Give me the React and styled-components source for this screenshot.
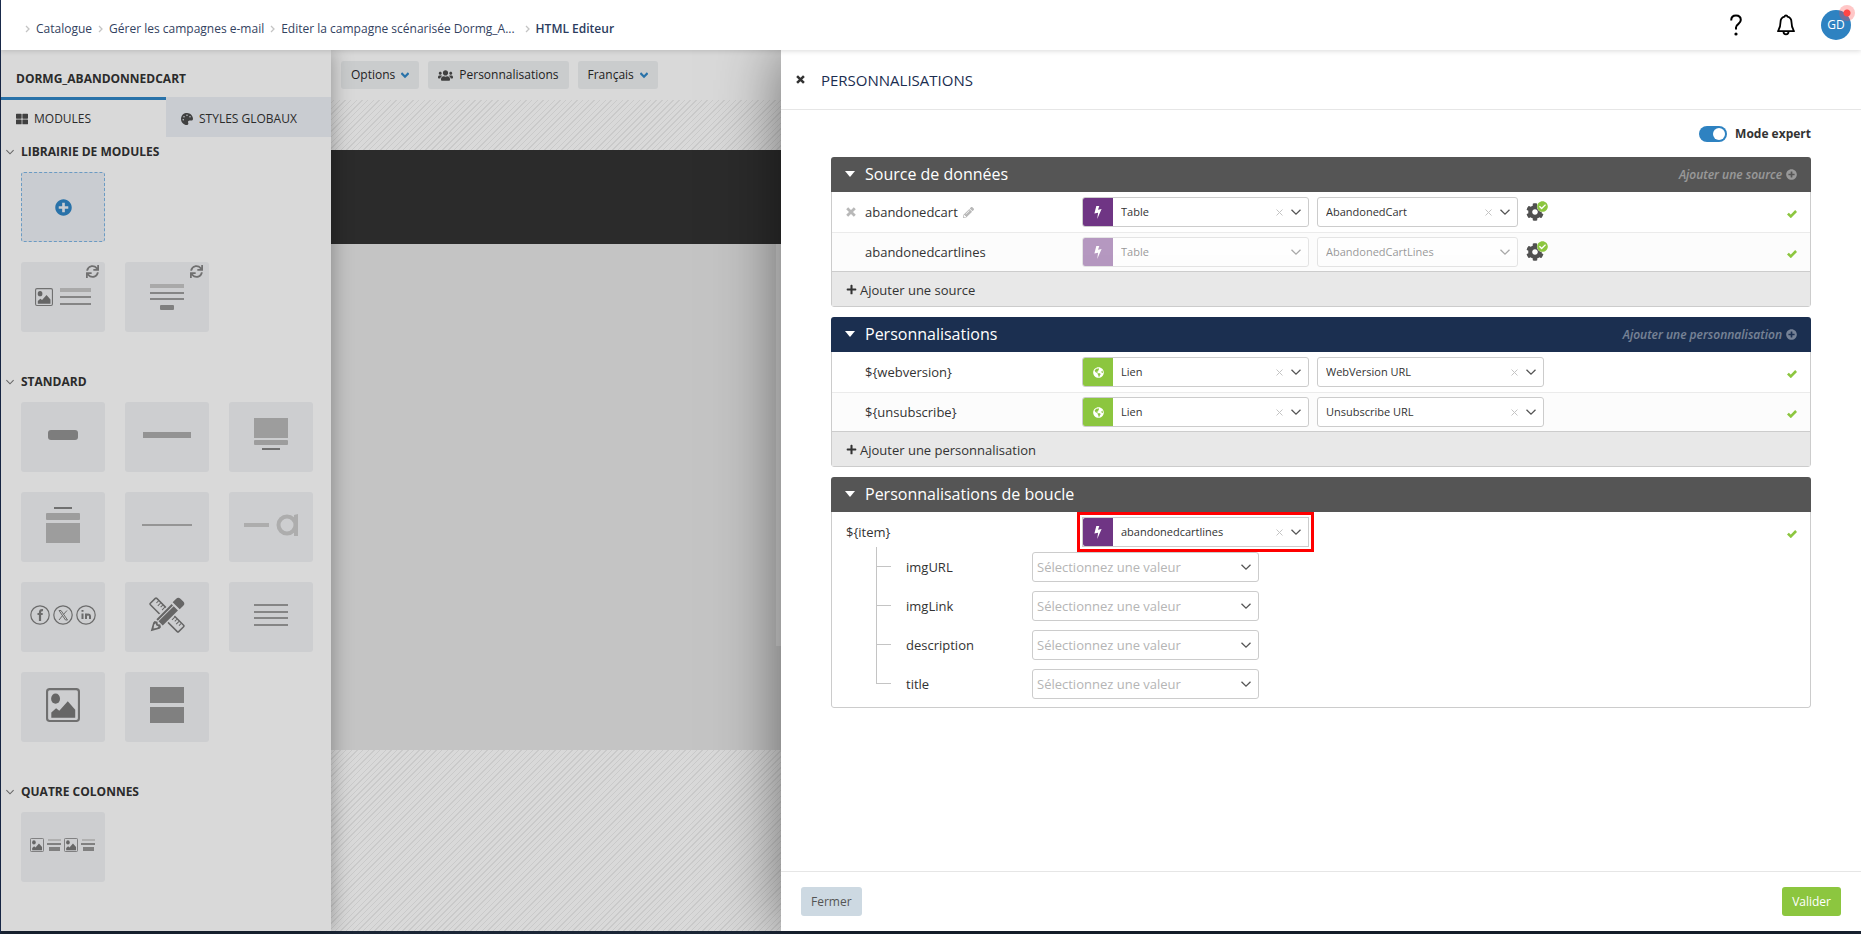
import React from "react";
import styled, { createGlobalStyle } from "styled-components";
import {
  FaThLarge,
  FaPalette,
  FaUsers,
  FaSync,
  FaPlusCircle,
  FaPlus,
  FaPencilAlt,
  FaGlobeAmericas,
  FaCog,
  FaCheckCircle
} from "react-icons/fa";

const GlobalStyle = createGlobalStyle`
  * {
    box-sizing: border-box;
  }
  body {
    margin: 0;
    font-family: "Open Sans", "Noto Sans", sans-serif;
    font-size: 13px;
    line-height: 18px;
    color: #333;
    background: #fff;
  }
  button, select {
    font: inherit;
    color: inherit;
    border: 0;
    padding: 0;
    background: none;
    cursor: pointer;
  }
  h1, h2, p {
    margin: 0;
    font-size: inherit;
    font-weight: inherit;
  }
  svg {
    display: block;
    flex: none;
  }
`;

const Page = styled.div`
  min-height: 100vh;
  display: flex;
  flex-direction: column;
  border-left: 1px solid #1b2d50;
  border-bottom: 3px solid #1b2636;
`;

/* header */

const Header = styled.header`
  position: relative;
  z-index: 3;
  height: 50px;
  padding: 0 10px 0 24px;
  display: flex;
  align-items: center;
  justify-content: space-between;
  background: #fff;
  box-shadow: 0 1px 5px rgba(0, 0, 0, 0.15);
`;

const Breadcrumb = styled.nav`
  display: flex;
  align-items: center;
  gap: 6px;
  margin-top: 8px;
  svg {
    color: #c4c4c4;
  }
`;

const Crumb = styled.a`
  font-size: 12px;
  font-weight: ${props => (props.$current ? 600 : 400)};
  color: ${props => (props.$current ? "#2b3c5e" : "#33425f")};
  text-decoration: none;
  margin-right: ${props => (props.$wide ? "4px" : "0")};
`;

const HeaderActions = styled.div`
  display: flex;
  align-items: center;
`;

const HeaderButton = styled.button`
  width: 50px;
  height: 30px;
  display: flex;
  align-items: center;
  justify-content: center;
  color: #000;
`;

const Avatar = styled.button`
  position: relative;
  width: 30px;
  height: 30px;
  margin-left: 10px;
  border-radius: 50%;
  background: #2e82c1;
  color: #fff;
  font-size: 12px;
  &::after {
    content: "";
    position: absolute;
    top: -5px;
    right: -4px;
    width: 16px;
    height: 16px;
    border-radius: 50%;
    background: radial-gradient(
      circle,
      #ff4545 0 3px,
      rgba(255, 69, 69, 0.3) 4px
    );
  }
`;

const Main = styled.div`
  flex: 1;
  display: flex;
`;

/* sidebar */

const Sidebar = styled.aside`
  position: relative;
  z-index: 1;
  flex: 0 0 330px;
  background: #d9d9d9;
  color: #2b2b2b;
  font-size: 12px;
  box-shadow: 0 0 20px rgba(0, 0, 0, 0.35);
`;

const SidebarTitle = styled.h1`
  height: 47px;
  padding: 20px 15px 0;
  font-weight: 700;
`;

const Tabs = styled.div`
  display: flex;
`;

const Tab = styled.button`
  flex: 1;
  height: 40px;
  padding: 0 15px;
  display: flex;
  align-items: center;
  gap: 6px;
  border-top: 3px solid ${props => (props.$active ? "#2972a9" : "#c9ccd1")};
  background: ${props => (props.$active ? "#d9d9d9" : "#c9ccd1")};
  svg {
    color: #404040;
  }
`;

const Section = styled.section`
  padding-bottom: 35px;
`;

const SectionTitle = styled.button`
  height: 30px;
  margin-bottom: 5px;
  padding: 0 5px;
  display: flex;
  align-items: center;
  gap: 7px;
  font-weight: 700;
  svg {
    color: #666;
  }
`;

const Tiles = styled.div`
  display: grid;
  grid-template-columns: repeat(3, 84px);
  gap: 20px;
  padding-left: 20px;
`;

const AddRow = styled.div`
  padding-bottom: 20px;
`;

const Tile = styled.button`
  position: relative;
  height: 70px;
  padding-bottom: ${props => (props.$standard ? "4px" : "0")};
  display: flex;
  align-items: center;
  justify-content: center;
  border-radius: 3px;
  border: ${props => (props.$add ? "1px dashed #6b9bc3" : "0")};
  background: ${props => (props.$add ? "#c9ccd1" : "#cdced0")};
  color: ${props => (props.$add ? "#2972a9" : "#707070")};
`;

const TileBadge = styled.span`
  position: absolute;
  top: 3px;
  right: 6px;
`;

/* editor canvas */

const Editor = styled.main`
  flex: 5 1 0;
  min-width: 0;
  display: flex;
  flex-direction: column;
  background-color: #d9d9d9;
`;

const Toolbar = styled.div`
  height: 50px;
  padding: 0 10px;
  display: flex;
  align-items: center;
  gap: 9px;
  white-space: nowrap;
`;

const ToolButton = styled.button`
  height: 28px;
  padding: 0 10px;
  display: flex;
  align-items: center;
  gap: 6px;
  border-radius: 3px;
  background: #cacccd;
  color: #222;
  font-size: 12px;
  svg {
    color: ${props => (props.$people ? "#404040" : "#2972a9")};
  }
`;

const Canvas = styled.div`
  flex: 1;
  padding-top: 50px;
  background-image: repeating-linear-gradient(
    -45deg,
    #d9d9d9 0 3px,
    #cacaca 3px 4px
  );
`;

const MailHeader = styled.div`
  height: 94px;
  background: #2b2b2b;
`;

const MailBody = styled.div`
  height: 506px;
  display: flex;
  justify-content: flex-end;
  background: #c4c4c4;
`;

const MailContent = styled.div`
  width: 5px;
  height: 402px;
  background: #d4d4d4;
`;

/* drawer */

const Drawer = styled.section`
  position: relative;
  z-index: 2;
  flex: 12 1 0;
  min-width: 0;
  display: flex;
  flex-direction: column;
  background: #fff;
  box-shadow: 0 0 60px rgba(0, 0, 0, 0.5);
`;

const DrawerHeader = styled.div`
  height: 60px;
  padding: 0 15px;
  display: flex;
  align-items: center;
  gap: 16px;
  border-bottom: 1px solid #e6e6e6;
`;

const DrawerTitle = styled.h2`
  font-size: 15px;
  line-height: 22px;
  color: #1b2d50;
`;

const DrawerBody = styled.div`
  flex: 1;
  padding: 14px 50px;
`;

const DrawerFooter = styled.div`
  height: 60px;
  padding: 0 20px;
  display: flex;
  align-items: center;
  justify-content: space-between;
  border-top: 1px solid #e6e6e6;
`;

const FooterButton = styled.button`
  height: 29px;
  padding: 0 10px;
  border-radius: 3px;
  font-size: 12px;
  background: ${props => (props.$primary ? "#8cc63f" : "#cdd9e2")};
  color: ${props => (props.$primary ? "#fff" : "#555")};
  font-weight: ${props => (props.$primary ? 500 : 400)};
`;

const Expert = styled.label`
  display: flex;
  align-items: center;
  justify-content: flex-end;
  gap: 8px;
  height: 20px;
  margin-bottom: 13px;
  font-size: 12px;
  font-weight: 700;
`;

const Switch = styled.input`
  appearance: none;
  width: 28px;
  height: 16px;
  margin: 0;
  padding: 2px;
  display: flex;
  justify-content: flex-end;
  border-radius: 8px;
  background: #2e82c1;
  &::before {
    content: "";
    width: 12px;
    height: 12px;
    border-radius: 50%;
    background: #fff;
  }
`;

const Panel = styled.section`
  margin-bottom: 10px;
  border-radius: 3px;
  overflow: hidden;
`;

const PanelHeader = styled.div`
  height: 35px;
  padding: 0 14px;
  display: flex;
  align-items: center;
  justify-content: space-between;
  background: ${props => (props.$blue ? "#1b2f50" : "#555")};
  color: #fff;
`;

const PanelToggle = styled.button`
  display: flex;
  align-items: center;
  gap: 10px;
  padding-bottom: 1px;
  font-size: 16px;
`;

const PanelAdd = styled.button`
  display: flex;
  align-items: center;
  gap: 4px;
  font-size: 12px;
  font-style: italic;
  font-weight: 600;
  opacity: 0.4;
`;

const PanelBody = styled.div`
  border: 1px solid #ccc;
  border-top: 0;
  border-radius: 0 0 3px 3px;
  padding-bottom: ${props => (props.$loop ? "8px" : "0")};
`;

const Row = styled.div`
  height: 40px;
  padding: 0 13px 0 14px;
  display: flex;
  align-items: center;
  gap: 8px;
  background: ${props => (props.$alt ? "#fcfcfc" : "#fff")};
  box-shadow: ${props => (props.$alt ? "inset 0 1px #ebebeb" : "none")};
`;

const RowName = styled.div`
  flex: 0 0 228px;
  display: flex;
  align-items: center;
  gap: 5px;
  padding-left: ${props => (props.$indent ? "19px" : "0")};
  svg {
    color: #b8b8b8;
  }
`;

const RemoveButton = styled.button`
  width: 14px;
`;

const RowCheck = styled.span`
  margin: 4px 0 0 auto;
  color: #8cc63f;
`;

const PanelFooter = styled.button`
  width: 100%;
  height: 35px;
  margin-top: -1px;
  padding: 1px 14px 0;
  display: flex;
  align-items: center;
  gap: 3px;
  border-top: 1px solid #ccc;
  background: #e8e8e8;
`;

const Field = styled.div`
  width: ${props => (props.$short ? "201px" : "227px")};
  height: 30px;
  display: flex;
  border: 1px solid #ccc;
  border-radius: ${props => (props.$marked ? "0" : "3px")};
  background: #fff;
  opacity: ${props => (props.$disabled ? 0.5 : 1)};
  outline: ${props => (props.$marked ? "3px solid #f00" : "none")};
  outline-offset: 2px;
`;

const FieldIcon = styled.span`
  width: 30px;
  display: flex;
  align-items: center;
  justify-content: center;
  border-radius: 2px 0 0 2px;
  color: #fff;
  background: ${props => (props.$green ? "#8cc63f" : "#6f3584")};
`;

const FieldBox = styled.div`
  flex: 1;
  display: grid;
  align-items: center;
`;

const FieldSelect = styled.select`
  grid-area: 1 / 1;
  appearance: none;
  width: 100%;
  height: 28px;
  padding: 0 44px 0 ${props => (props.$empty ? "4px" : "8px")};
  font-size: ${props => (props.$empty ? "13px" : "11px")};
  color: ${props => (props.$empty ? "#b5b5b5" : "#333")};
  opacity: 1;
`;

const FieldEnd = styled.div`
  grid-area: 1 / 1;
  justify-self: end;
  display: flex;
  align-items: center;
  gap: 8px;
  padding-right: 7px;
  color: #555;
  pointer-events: none;
  button {
    color: #c4c4c4;
    pointer-events: auto;
  }
`;

const GearButton = styled.button`
  position: relative;
  color: #505050;
`;

const GearBadge = styled.span`
  position: absolute;
  top: -2px;
  left: 11px;
  color: #8cc63f;
  background: #fff;
  border-radius: 50%;
`;

const Tree = styled.div`
  margin-left: 44px;
  display: flex;
  flex-direction: column;
  gap: 9px;
`;

const TreeRow = styled.div`
  height: 30px;
  display: flex;
  align-items: center;
`;

const Branch = styled.span`
  align-self: flex-end;
  flex: 0 0 15px;
  height: ${props => (props.$first ? "20px" : "39px")};
  margin-bottom: 15px;
  border-left: 1px solid #c4c4c4;
  border-bottom: 1px solid #c4c4c4;
`;

const TreeLabel = styled.label`
  flex: 0 0 141px;
  padding-left: 15px;
`;

/* drawings */

const Chevron = ({ size = 10, weight = 1.3 }) => (
  <svg width={size} height={size} viewBox="0 0 10 10" fill="none" stroke="currentColor" strokeWidth={weight}>
    <path d="M.5 2.700 5 7.200l4.500-4.500" />
  </svg>
);

const CrumbArrow = () => (
  <svg width="5" height="8" viewBox="0 0 5 8" fill="none" stroke="currentColor" strokeWidth="1.3">
    <path d="M1 1l3 3-3 3" />
  </svg>
);

const Caret = () => (
  <svg width="10" height="6" viewBox="0 0 10 6" fill="currentColor">
    <path d="M0 0h10L5 6z" />
  </svg>
);

const Cross = ({ size = 10 }) => (
  <svg width={size} height={size} viewBox="0 0 10 10" stroke="currentColor" strokeWidth="2.800">
    <path d="M1.200 1.200l7.600 7.600M8.800 1.200l-7.600 7.600" />
  </svg>
);

const Clear = () => (
  <svg width="7" height="7" viewBox="0 0 7 7" stroke="currentColor">
    <path d="M.5.5l6 6M6.5.5l-6 6" />
  </svg>
);

const Tick = () => (
  <svg width="10" height="8" viewBox="0 0 10 8" fill="none" stroke="currentColor" strokeWidth="2.600">
    <path d="M.9 3.600l2.900 2.800L9.100 1" />
  </svg>
);

const Bolt = () => (
  <svg width="8" height="13" viewBox="0 0 8 13" fill="currentColor">
    <path d="M2.3 0h3L4 3.7 7.6 3 3.2 13l.9-6.2L.4 7.6z" />
  </svg>
);

const HelpIcon = () => (
  <svg width="12" height="22" viewBox="0 0 12 22" fill="none" stroke="#000" strokeWidth="2">
    <path d="M1.2 6.5C1.2 3.3 3 1.6 6 1.6s4.800 1.700 4.800 4.500c0 4-4.800 4-4.800 7.400v2" />
    <circle cx="6" cy="20" r="1.600" fill="#000" stroke="none" />
  </svg>
);

const BellIcon = () => (
  <svg width="18" height="22" viewBox="0 0 18 22" fill="none" stroke="#000" strokeWidth="1.800" strokeLinejoin="round">
    <path d="M7.700 2.600a1.300 1.300 0 0 1 2.600 0c2.700.6 4.200 2.800 4.200 5.700 0 4.600 1 6 2.500 8.900H1c1.500-2.900 2.500-4.300 2.500-8.900 0-2.900 1.500-5.100 4.200-5.700z" />
    <path d="M6.500 17.500c0 1.900 1 2.900 2.500 2.900s2.500-1 2.500-2.900" />
  </svg>
);

const Picture = ({ x = 0, y = 0, size = 32 }) => (
  <svg x={x} y={y} width={size} height={size} viewBox="0 0 32 32">
    <rect x="1" y="1" width="30" height="30" rx="2.500" fill="none" stroke="#707070" strokeWidth="2" />
    <ellipse cx="9" cy="10" rx="4.200" ry="4.800" fill="#666" />
    <path d="M5 28v-5l4.500-4 3 2.500 8-9 7 8v7.500z" fill="#666" />
  </svg>
);

const drawings = {
  add: <FaPlusCircle size={17} />,
  pictureText: (
    <svg width="56" height="20">
      <Picture x={0} y={1} size={18} />
      <path fill="#a9a9a9" d="M25 1h31v4H25z" />
      <path fill="#858585" d="M25 9h31v2H25zM25 16h31v2H25z" />
    </svg>
  ),
  textButton: (
    <svg width="34" height="28">
      <path fill="#a9a9a9" d="M0 1h34v4H0z" />
      <path fill="#858585" d="M0 9h34v2H0zM0 15h34v2H0z" />
      <rect x="10" y="22" width="14" height="5" rx="1" fill="#808080" />
    </svg>
  ),
  button: (
    <svg width="30" height="10">
      <rect width="30" height="10" rx="3" fill="#7d7d7d" />
    </svg>
  ),
  band: (
    <svg width="48" height="6">
      <path fill="#939393" d="M0 0h48v6H0z" />
    </svg>
  ),
  articleDown: (
    <svg width="34" height="34">
      <path fill="#9d9d9d" d="M0 0h34v20H0z" />
      <rect y="22" width="34" height="5" rx="1" fill="#9d9d9d" />
      <rect x="8" y="30" width="18" height="2" fill="#707070" />
    </svg>
  ),
  articleUp: (
    <svg width="34" height="36">
      <rect x="8" y="0" width="18" height="2" fill="#707070" />
      <rect y="6" width="34" height="7" rx="1" fill="#9d9d9d" />
      <path fill="#9d9d9d" d="M0 16h34v20H0z" />
    </svg>
  ),
  line: (
    <svg width="50" height="2">
      <path fill="#959595" d="M0 0h50v2H0z" />
    </svg>
  ),
  spacer: (
    <svg width="54" height="24" fill="none" stroke="#adadad">
      <path strokeWidth="4" d="M0 12h25" />
      <circle cx="43" cy="12" r="8.500" strokeWidth="4" />
      <path fill="#adadad" stroke="none" d="M50 2l4-1v22h-4z" />
    </svg>
  ),
  social: (
    <svg width="66" height="20" fill="none" stroke="#6b6b6b" strokeWidth="1.200">
      <circle cx="10" cy="10" r="9.200" />
      <circle cx="33" cy="10" r="9.200" />
      <circle cx="56" cy="10" r="9.200" />
      <path strokeWidth="2.200" d="M13 5.200c-2.500-.3-3 .6-3 2.500V16M7.500 9h5.200" />
      <path strokeWidth="1" d="M29 5.500h2l6.500 9.500h-2zM37 5.500l-3.600 4M32.200 11 29 15" />
      <path strokeWidth="2" d="M52.500 8.500V14M52.500 5v1.800M56 14V8.500M56 11c0-1.800 4-2.300 4 .2V14" />
    </svg>
  ),
  tools: (
    <svg width="36" height="36" viewBox="0 0 36 36">
      <g transform="rotate(45 18 18)" fill="none" stroke="#666">
        <rect x="-2" y="13.500" width="40" height="9" rx="1" strokeWidth="1.500" />
        <path d="M2 14v3M5 14v4M8 14v3M11 14v4M25 14v4M28 14v3M31 14v4M34 14v3" />
      </g>
      <g transform="rotate(-45 18 18)">
        <path fill="#cdced0" d="M-5 17l7-5h34l4 2v8l-4 2H2z" />
        <path fill="#666" d="M-5 18l8-4.500h2l1.500 2.500-1.500 2 1.500 2-1.500 2.500H3zM7.500 13.500H29v2H7.500zM7.500 16.500H29v6H7.500zM31 13h5q3 0 3 3v4q0 3-3 3h-5z" />
        <path fill="#cdced0" d="M-1 18l3-2.200h2l-1 2.200 1 2.200H2z" />
      </g>
    </svg>
  ),
  text: (
    <svg width="34" height="24">
      <path fill="#858585" d="M0 1h34v2H0zM0 8h34v2H0zM0 14h34v2H0zM0 21h34v2H0z" />
    </svg>
  ),
  picture: <Picture size={34} />,
  blocks: (
    <svg width="34" height="36">
      <path fill="#808080" d="M0 0h34v16H0zM0 20h34v16H0z" />
    </svg>
  ),
  columns: (
    <svg width="66" height="14">
      <Picture x={0} y={0} size={14} />
      <Picture x={34} y={0} size={14} />
      <path fill="#b0b0b0" d="M18 1h13v2H18zM52 1h13v2H52z" />
      <path fill="#808080" d="M17 5h14v2H17zM19 9h11v4H19zM51 5h14v2H51zM53 9h11v4H53z" />
    </svg>
  )
};

const standard = [
  ["Bouton", "button"],
  ["Bandeau", "band"],
  ["Article", "articleDown"],
  ["Article avec titre", "articleUp"],
  ["Ligne", "line"],
  ["Préheader", "spacer"],
  ["Réseaux sociaux", "social"],
  ["Libre", "tools"],
  ["Texte", "text"],
  ["Image", "picture"],
  ["Blocs", "blocks"]
];

const Heading = ({ children }) => (
  <h2>
    <SectionTitle>
      <Chevron size={8} />
      {children}
    </SectionTitle>
  </h2>
);

const Select = ({ icon, value, label, id, clear, ...rest }) => (
  <Field {...rest}>
    {icon && (
      <FieldIcon $green={icon === "globe"}>
        {icon === "globe" ? <FaGlobeAmericas size={11} /> : <Bolt />}
      </FieldIcon>
    )}
    <FieldBox>
      <FieldSelect id={id} aria-label={label} disabled={rest.$disabled} $empty={rest.$empty}>
        <option>{value}</option>
      </FieldSelect>
      <FieldEnd>
        {clear && (
          <button aria-label="Effacer">
            <Clear />
          </button>
        )}
        <Chevron />
      </FieldEnd>
    </FieldBox>
  </Field>
);

const PanelTop = ({ title, add, blue }) => (
  <PanelHeader $blue={blue}>
    <h2>
      <PanelToggle>
        <Caret />
        {title}
      </PanelToggle>
    </h2>
    {add && (
      <PanelAdd>
        {add}
        <FaPlusCircle size={11} />
      </PanelAdd>
    )}
  </PanelHeader>
);

const Gear = () => (
  <GearButton aria-label="Paramètres">
    <FaCog size={18} />
    <GearBadge>
      <FaCheckCircle size={11} />
    </GearBadge>
  </GearButton>
);

const Valid = () => (
  <RowCheck>
    <Tick />
  </RowCheck>
);

export default function App() {
  return (
    <Page>
      <GlobalStyle />
      <Header>
        <Breadcrumb>
          <CrumbArrow />
          <Crumb href="#catalogue">Catalogue</Crumb>
          <CrumbArrow />
          <Crumb href="#campagnes">Gérer les campagnes e-mail</Crumb>
          <CrumbArrow />
          <Crumb href="#campagne" $wide>Editer la campagne scénarisée Dormg_A...</Crumb>
          <CrumbArrow />
          <Crumb href="#editeur" $current>HTML Editeur</Crumb>
        </Breadcrumb>
        <HeaderActions>
          <HeaderButton aria-label="Aide">
            <HelpIcon />
          </HeaderButton>
          <HeaderButton aria-label="Notifications">
            <BellIcon />
          </HeaderButton>
          <Avatar>GD</Avatar>
        </HeaderActions>
      </Header>
      <Main>
        <Sidebar>
          <SidebarTitle>DORMG_ABANDONNEDCART</SidebarTitle>
          <Tabs>
            <Tab $active>
              <FaThLarge size={12} />
              MODULES
            </Tab>
            <Tab>
              <FaPalette size={12} />
              STYLES GLOBAUX
            </Tab>
          </Tabs>
          <Section>
            <Heading>LIBRAIRIE DE MODULES</Heading>
            <AddRow>
              <Tiles>
                <Tile $add aria-label="Ajouter un module">{drawings.add}</Tile>
              </Tiles>
            </AddRow>
            <Tiles>
              {["pictureText", "textButton"].map(name => (
                <Tile key={name} aria-label="Module">
                  {drawings[name]}
                  <TileBadge>
                    <FaSync size={13} />
                  </TileBadge>
                </Tile>
              ))}
            </Tiles>
          </Section>
          <Section>
            <Heading>STANDARD</Heading>
            <Tiles>
              {standard.map(([label, name]) => (
                <Tile key={name} $standard aria-label={label}>{drawings[name]}</Tile>
              ))}
            </Tiles>
          </Section>
          <Section>
            <Heading>QUATRE COLONNES</Heading>
            <Tiles>
              <Tile $standard aria-label="Quatre colonnes">{drawings.columns}</Tile>
            </Tiles>
          </Section>
        </Sidebar>
        <Editor>
          <Toolbar>
            <ToolButton>
              Options
              <Chevron size={8} weight={2.8} />
            </ToolButton>
            <ToolButton $people>
              <FaUsers size={15} />
              Personnalisations
            </ToolButton>
            <ToolButton>
              Français
              <Chevron size={8} weight={2.8} />
            </ToolButton>
          </Toolbar>
          <Canvas>
            <MailHeader />
            <MailBody>
              <MailContent />
            </MailBody>
          </Canvas>
        </Editor>
        <Drawer>
          <DrawerHeader>
            <button aria-label="Fermer le panneau">
              <Cross size={9} />
            </button>
            <DrawerTitle>PERSONNALISATIONS</DrawerTitle>
          </DrawerHeader>
          <DrawerBody>
            <Expert>
              <Switch type="checkbox" role="switch" defaultChecked />
              Mode expert
            </Expert>
            <Panel>
              <PanelTop title="Source de données" add="Ajouter une source" />
              <PanelBody>
                <Row>
                  <RowName>
                    <RemoveButton aria-label="Supprimer">
                      <Cross />
                    </RemoveButton>
                    abandonedcart
                    <button aria-label="Renommer">
                      <FaPencilAlt size={11} />
                    </button>
                  </RowName>
                  <Select icon="bolt" value="Table" label="Type de source" clear />
                  <Select value="AbandonedCart" label="Table" clear $short />
                  <Gear />
                  <Valid />
                </Row>
                <Row $alt>
                  <RowName $indent>abandonedcartlines</RowName>
                  <Select icon="bolt" value="Table" label="Type de source" $disabled />
                  <Select value="AbandonedCartLines" label="Table" $disabled $short />
                  <Gear />
                  <Valid />
                </Row>
                <PanelFooter>
                  <FaPlus size={11} />
                  Ajouter une source
                </PanelFooter>
              </PanelBody>
            </Panel>
            <Panel>
              <PanelTop title="Personnalisations" add="Ajouter une personnalisation" blue />
              <PanelBody>
                <Row>
                  <RowName $indent>{"${webversion}"}</RowName>
                  <Select icon="globe" value="Lien" label="Type" clear />
                  <Select value="WebVersion URL" label="Lien" clear />
                  <Valid />
                </Row>
                <Row $alt>
                  <RowName $indent>{"${unsubscribe}"}</RowName>
                  <Select icon="globe" value="Lien" label="Type" clear />
                  <Select value="Unsubscribe URL" label="Lien" clear />
                  <Valid />
                </Row>
                <PanelFooter>
                  <FaPlus size={11} />
                  Ajouter une personnalisation
                </PanelFooter>
              </PanelBody>
            </Panel>
            <Panel>
              <PanelTop title="Personnalisations de boucle" />
              <PanelBody $loop>
                <Row>
                  <RowName>{"${item}"}</RowName>
                  <Select icon="bolt" value="abandonedcartlines" label="Source de la boucle" clear $marked />
                  <Valid />
                </Row>
                <Tree>
                  {["imgURL", "imgLink", "description", "title"].map((name, i) => (
                    <TreeRow key={name}>
                      <Branch $first={i === 0} />
                      <TreeLabel htmlFor={name}>{name}</TreeLabel>
                      <Select id={name} value="Sélectionnez une valeur" $empty />
                    </TreeRow>
                  ))}
                </Tree>
              </PanelBody>
            </Panel>
          </DrawerBody>
          <DrawerFooter>
            <FooterButton>Fermer</FooterButton>
            <FooterButton $primary>Valider</FooterButton>
          </DrawerFooter>
        </Drawer>
      </Main>
    </Page>
  );
}
